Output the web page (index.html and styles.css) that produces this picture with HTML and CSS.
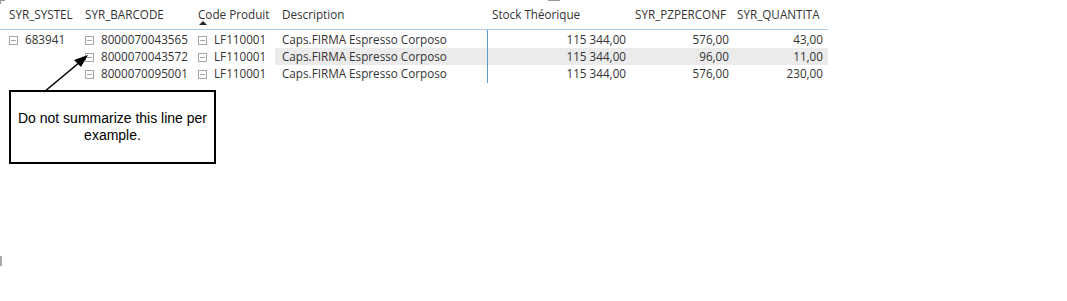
FILE: index.html
```html
<!DOCTYPE html>
<html>
<head>
<meta charset="utf-8">
<link rel="stylesheet" href="styles.css">
</head>
<body>
<div class="page">
  <div class="mark mark-tl"></div>
  <div class="mark mark-top"></div>
  <div class="mark mark-bl"></div>
  <div class="table">
    <div class="row head">
      <div class="c c1">SYR_SYSTEL</div>
      <div class="c c2">SYR_BARCODE</div>
      <div class="c c3">Code Produit<span class="sort"></span></div>
      <div class="c c4">Description</div>
      <div class="c c5">Stock Théorique</div>
      <div class="c c6">SYR_PZPERCONF</div>
      <div class="c c7">SYR_QUANTITA</div>
    </div>
    <div class="body">
      <div class="row">
        <div class="c c1"><span class="exp"></span>683941</div>
        <div class="c c2"><span class="exp"></span>8000070043565</div>
        <div class="c c3"><span class="exp"></span>LF110001</div>
        <div class="c c4">Caps.FIRMA Espresso Corposo</div>
        <div class="c c5 num">115 344,00</div>
        <div class="c c6 num">576,00</div>
        <div class="c c7 num">43,00</div>
      </div>
      <div class="row hl">
        <div class="c c1"></div>
        <div class="c c2"><span class="exp"></span>8000070043572</div>
        <div class="c c3"><span class="exp"></span>LF110001</div>
        <div class="c c4 shade">Caps.FIRMA Espresso Corposo</div>
        <div class="c c5 num shade">115 344,00</div>
        <div class="c c6 num shade">96,00</div>
        <div class="c c7 num shade">11,00</div>
      </div>
      <div class="row">
        <div class="c c1"></div>
        <div class="c c2"><span class="exp"></span>8000070095001</div>
        <div class="c c3"><span class="exp"></span>LF110001</div>
        <div class="c c4">Caps.FIRMA Espresso Corposo</div>
        <div class="c c5 num">115 344,00</div>
        <div class="c c6 num">576,00</div>
        <div class="c c7 num">230,00</div>
      </div>
      <div class="vline"></div>
    </div>
  </div>
  <svg class="arrow" width="60" height="50" viewBox="0 0 60 50">
    <line x1="4" y1="45" x2="40" y2="15" stroke="#000" stroke-width="1.6"/>
    <polygon points="48,8 34,13 41,20" fill="#000"/>
  </svg>
  <div class="note">Do not summarize this line per example.</div>
</div>
</body>
</html>
```

FILE: styles.css
```css
html, body {
  margin: 0;
  padding: 0;
  background: #fff;
}
.page {
  position: relative;
  width: 1067px;
  height: 301px;
  font-family: "Open Sans", "Noto Sans", sans-serif;
  font-size: 11.7px;
  color: #333;
}
.table {
  width: 828px;
}
.row {
  display: grid;
  grid-template-columns: 77px 113px 84px 213px 143px 103px 95px;
  height: 17px;
  line-height: 17px;
}
.head {
  height: 29px;
  line-height: 28px;
  border-bottom: 1px solid #a9cbe6;
  color: #333;
}
.body {
  position: relative;
  padding-top: 1px;
}
.c {
  white-space: nowrap;
  overflow: visible;
  position: relative;
}
.c1 { padding-left: 9px; }
.c2 { padding-left: 8px; }
.c3 { padding-left: 8px; }
.c4 { padding-left: 8px; }
.c5 { padding-left: 5px; }
.c6 { padding-left: 5px; }
.c7 { padding-left: 4px; }
.num {
  text-align: right;
  padding-left: 0;
}
.c5.num { padding-right: 4px; }
.c6.num { padding-right: 4px; }
.c7.num { padding-right: 5px; }
.shade { background: #ebebeb; }
.c4.shade { margin-left: 1px; padding-left: 7px; }
.exp {
  display: inline-block;
  width: 9px;
  height: 9px;
  border: 1px solid #a6a6a6;
  box-sizing: border-box;
  position: relative;
  margin-right: 7px;
  vertical-align: -1px;
}
.exp::after {
  content: "";
  position: absolute;
  left: 1px;
  top: 3px;
  width: 5px;
  height: 1px;
  background: #a6a6a6;
}
.sort {
  position: absolute;
  left: 9px;
  top: 21px;
  width: 0;
  height: 0;
  border-left: 4px solid transparent;
  border-right: 4px solid transparent;
  border-bottom: 4px solid #222;
}
.vline {
  position: absolute;
  left: 487px;
  top: 0;
  width: 1px;
  height: 53px;
  background: #5b9bd5;
}
.mark {
  position: absolute;
  background: #999;
}
.mark-tl {
  left: 0; top: 0; width: 5px; height: 4px;
  background: transparent;
  border-left: 1px solid #999;
  border-top: 1px solid #999;
  box-sizing: border-box;
}
.mark-top {
  left: 548px; top: 0; width: 12px; height: 1px;
}
.mark-bl {
  left: 0; top: 256px; width: 2px; height: 10px;
  background: #aaa;
}
.arrow {
  position: absolute;
  left: 40px;
  top: 47px;
}
.note {
  position: absolute;
  left: 9px;
  top: 90px;
  width: 207px;
  height: 74px;
  box-sizing: border-box;
  border: 2px solid #000;
  font-family: "Liberation Sans", Arial, sans-serif;
  font-size: 14px;
  color: #000;
  text-align: center;
  display: flex;
  align-items: center;
  justify-content: center;
  padding: 0 4px;
  line-height: 17px;
}
```
